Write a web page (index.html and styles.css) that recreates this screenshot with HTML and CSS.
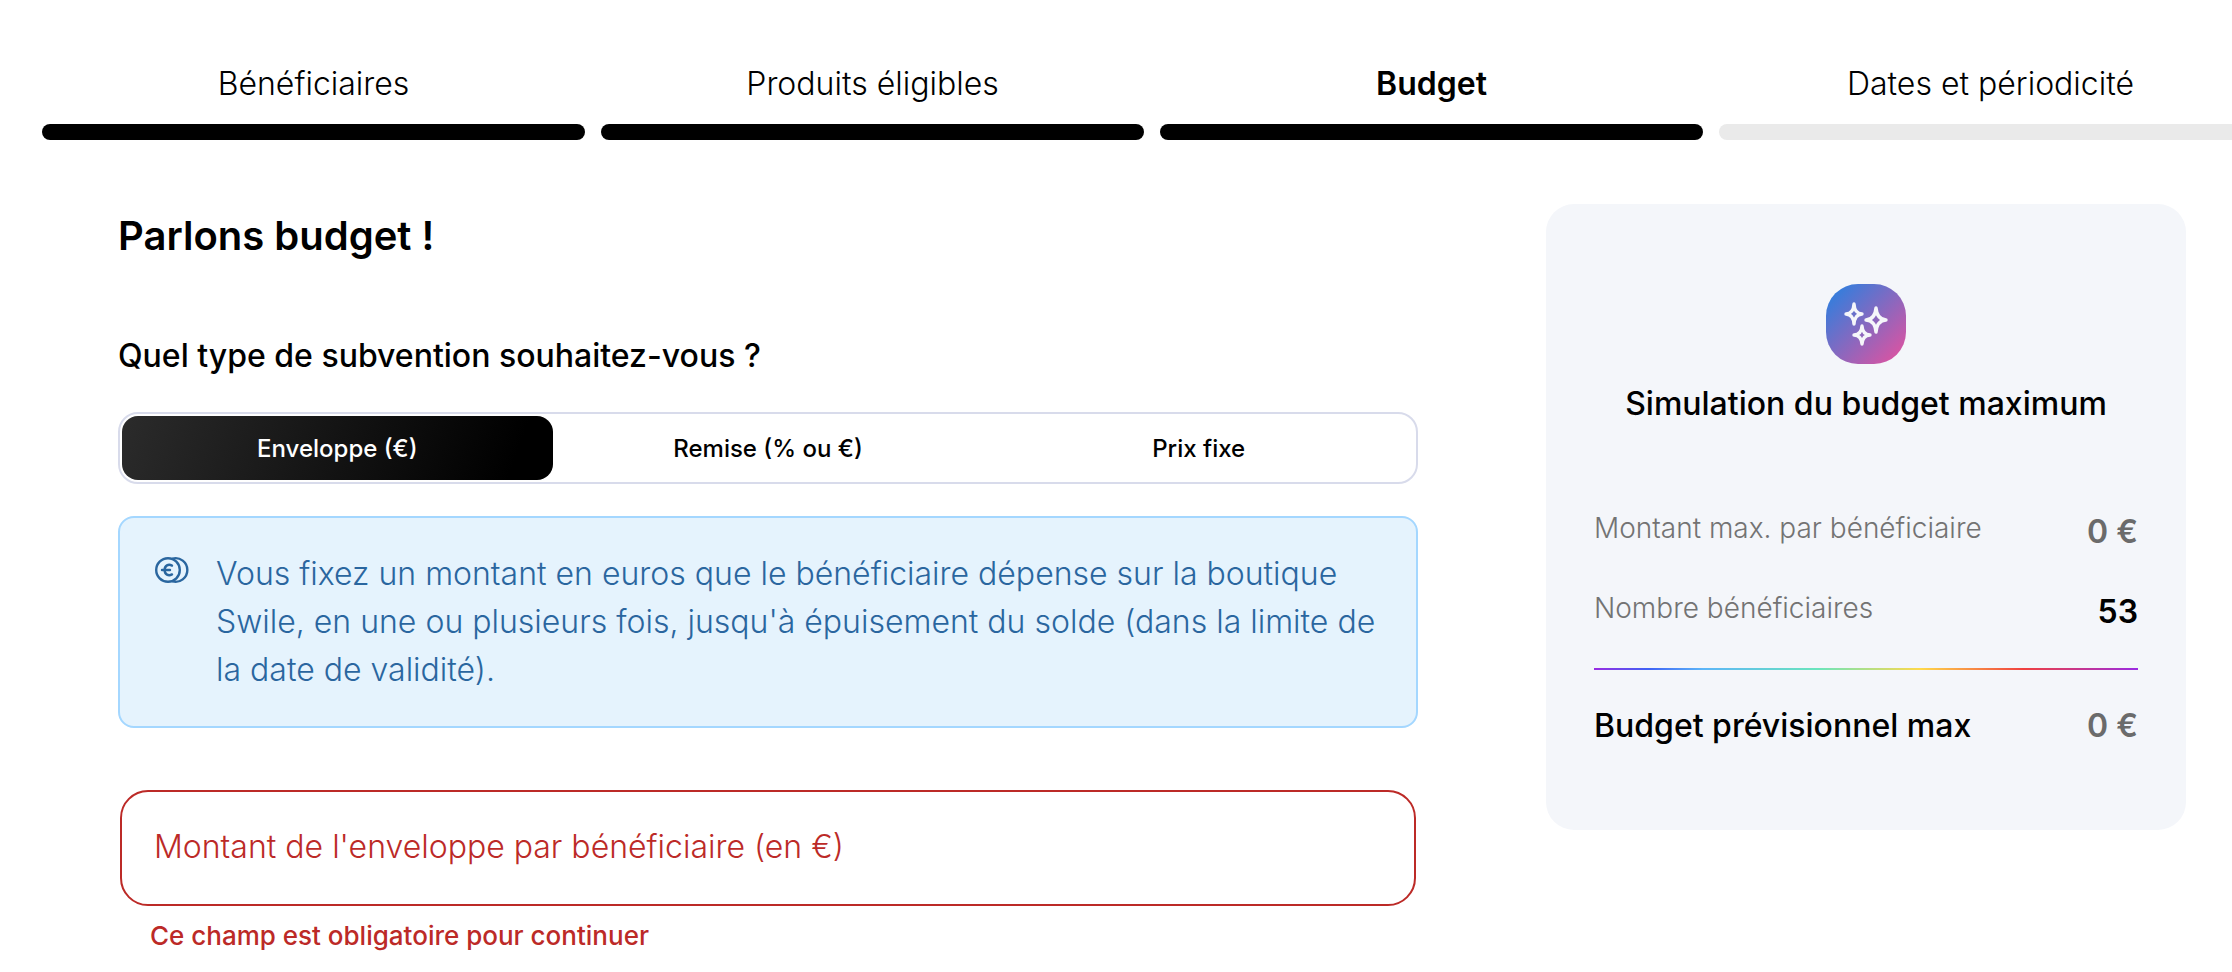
FILE: index.html
```
<!DOCTYPE html>
<html lang="fr">
<head>
    <meta charset="UTF-8">
    <meta name="viewport" content="width=device-width, initial-scale=1.0">
    <title>Parlons budget !</title>
    <link rel="stylesheet" href="styles.css">
</head>
<body>

<nav class="steps" aria-label="Étapes">
    <div class="step done">Bénéficiaires</div>
    <div class="step done">Produits éligibles</div>
    <div class="step done current" aria-current="step">Budget</div>
    <div class="step">Dates et périodicité</div>
</nav>

<div class="container">
    <main class="form">
        <h1>Parlons budget !</h1>
        <h2>Quel type de subvention souhaitez-vous ?</h2>

        <div class="tabs">
            <button type="button" class="tab active">Enveloppe (€)</button>
            <button type="button" class="tab">Remise (% ou €)</button>
            <button type="button" class="tab">Prix fixe</button>
        </div>

        <div class="info">
            <svg class="info-icon" viewBox="0 0 38 28" fill="none" stroke="currentColor" stroke-width="2.4" stroke-linecap="round">
                <circle cx="14" cy="14" r="11.8"/>
                <path d="M18.500 2.600A11.800 11.800 0 1 1 18.500 25.400"/>
                <path d="M18 9.600C14.400 7.600 10.600 9.600 10.600 14S14.400 20.400 18 18.400M8 14h8" stroke-width="2.4"/>
            </svg>
            <p>Vous fixez un montant en euros que le bénéficiaire dépense sur la boutique Swile, en une ou plusieurs fois, jusqu'à épuisement du solde (dans la limite de la date de validité).</p>
        </div>

        <div class="field">
            <input type="text" id="montant" placeholder=" " aria-describedby="montant-error">
            <label for="montant">Montant de l'enveloppe par bénéficiaire (en €)</label>
        </div>
        <p class="error" id="montant-error">Ce champ est obligatoire pour continuer</p>
    </main>

    <aside class="summary">
        <div class="summary-icon">
            <svg viewBox="0 0 80 80" fill="none" stroke="#f5f6fa" stroke-width="3.4" stroke-linejoin="round">
                <path d="M28 20Q28.500 29.500 36 30Q28.500 30.500 28 40Q27.500 30.500 20 30Q27.500 29.500 28 20Z"/>
                <path d="M50 24Q51 35.500 60 36Q51 36.500 50 48Q49 36.500 40 36Q49 35.500 50 24Z"/>
                <path d="M36 42Q36.500 50.500 44 51Q36.500 51.500 36 60Q35.500 51.500 28 51Q35.500 50.500 36 42Z"/>
            </svg>
        </div>
        <h3>Simulation du budget maximum</h3>
        <div class="row">
            <span class="label">Montant max. par bénéficiaire</span>
            <span class="value empty">0 €</span>
        </div>
        <div class="row">
            <span class="label">Nombre bénéficiaires</span>
            <span class="value">53</span>
        </div>
        <div class="rainbow"></div>
        <div class="row total">
            <span>Budget prévisionnel max</span>
            <span class="value empty">0 €</span>
        </div>
    </aside>
</div>

</body>
</html>
```
FILE: styles.css
```
* {
    margin: 0;
    padding: 0;
    box-sizing: border-box;
}

body {
    font-family: Inter, "Liberation Sans", sans-serif;
    font-size: 32px;
    line-height: 48px;
    font-weight: 300;
    color: #000;
    background-color: #fff;
    overflow: hidden;
}

/* the last step runs past the right edge */
.steps {
    display: flex;
    gap: 16px;
    margin: 60px -30px 64px 42px;
}

.step {
    flex: 1;
    text-align: center;
}

.step::after {
    content: "";
    display: block;
    height: 16px;
    margin-top: 16px;
    border-radius: 8px;
    background-color: #eaeaea;
}

.step.done::after {
    background-color: #000;
}

.step.current {
    font-weight: 600;
}

.container {
    display: grid;
    grid-template-columns: 1fr 640px;
    gap: 128px;
    align-items: start;
    padding: 0 46px 0 118px;
}

h1 {
    font-size: 40px;
    line-height: 64px;
    font-weight: 600;
    margin-bottom: 64px;
}

h2, h3 {
    font-size: 32px;
    line-height: 48px;
    font-weight: 500;
}

.tabs {
    display: flex;
    margin: 32px 0;
    padding: 2px;
    border: 2px solid #d8dbeb;
    border-radius: 20px;
}

.tab {
    flex: 1;
    height: 64px;
    border: none;
    border-radius: 16px;
    background: none;
    color: #000;
    font-family: inherit;
    font-size: 24px;
    font-weight: 500;
    cursor: pointer;
}

.tab.active {
    background: linear-gradient(110deg, #2b2b2b, #000 90%);
    color: #fff;
}

.info {
    display: flex;
    align-items: flex-start;
    gap: 24px;
    padding: 32px 32px 32px 34px;
    border: 2px solid #a4d7ff;
    border-radius: 16px;
    background-color: #e5f3fd;
    color: #2a669f;
}

.info-icon {
    flex: none;
    width: 38px;
    height: 28px;
    margin-top: 6px;
}

.field {
    position: relative;
    margin: 62px 2px 0;
}

.field input {
    display: block;
    width: 100%;
    height: 116px;
    padding: 0 32px;
    border: 2px solid #bc2a27;
    border-radius: 28px;
    background-color: #fff;
    font: inherit;
    outline: none;
}

.field label {
    position: absolute;
    top: 33px;
    left: 34px;
    color: #bc2a27;
    pointer-events: none;
}

.field input:not(:placeholder-shown) + label {
    display: none;
}

.error {
    margin: 14px 32px 0;
    color: #bc2a27;
    font-size: 26px;
    line-height: 32px;
    font-weight: 500;
}

.summary {
    padding: 80px 48px;
    border-radius: 28px;
    background-color: #f4f6fa;
}

.summary-icon {
    width: 80px;
    height: 80px;
    margin: 0 auto 16px;
    border-radius: 32px;
    background: linear-gradient(135deg, #2a80e0 5%, #e052a0 95%);
}

.summary-icon svg {
    display: block;
}

.summary h3 {
    margin-bottom: 80px;
    text-align: center;
}

.row {
    display: flex;
    justify-content: space-between;
    margin-bottom: 32px;
}

.label {
    font-size: 28px;
    line-height: 40px;
    color: #737373;
}

.value {
    font-weight: 600;
}

.value.empty {
    color: #6b6b6b;
}

.rainbow {
    height: 2px;
    background: linear-gradient(90deg, #9a2be2, #3f62f5 10%, #5cb5f8 20%, #6ae5bd 41%, #ffd94a 60%, #f0403f 79%, #9a2be2);
}

.row.total {
    margin: 32px 0 0;
    font-weight: 500;
}
```
